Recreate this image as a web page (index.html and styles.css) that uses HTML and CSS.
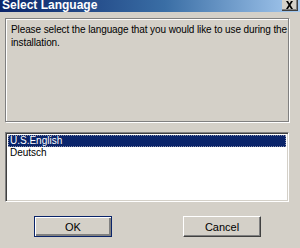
FILE: index.html
```
<!DOCTYPE html>
<html lang="en">
	<head>
		<meta charset="utf-8" />
		<title>Select Language</title>
		<link rel="stylesheet" href="styles.css">
	</head>
	<body>
		<div class="dialog">
			<div class="titlebar">
				<span class="title">Select Language</span>
				<span class="close">
					<svg width="9" height="8" viewBox="0 0 9 8">
						<path d="M1 0h2l1.5 2.5L6 0h2L5.5 4 8 8H6L4.5 5.5 3 8H1l2.5-4z" fill="#000" />
					</svg>
				</span>
			</div>

			<div class="content">
				<div class="group">
					<p>Please select the language that you would like to use during the installation.</p>
				</div>

				<ul class="listbox">
					<li class="selected">U.S.English</li>
					<li>Deutsch</li>
				</ul>

				<div class="buttons">
					<button type="button" class="default">OK</button>
					<button type="button">Cancel</button>
				</div>
			</div>
		</div>
	</body>
</html>
```

FILE: styles.css
```
* {
	box-sizing: border-box;
}

body {
	margin: 0;
	background: #d4d0c8;
	font-family: 'Liberation Sans', Arial, sans-serif;
	font-size: 10px;
	color: #000;
}

.dialog {
	width: 300px;
	height: 248px;
	overflow: hidden;
}

.titlebar {
	display: flex;
	justify-content: space-between;
	align-items: flex-start;
	height: 12px;
	background: linear-gradient(to right, #0a246a 0%, #3a6ea5 55%, #a6caf0 100%);
	overflow: hidden;
}

.title {
	color: #fff;
	font-weight: bold;
	font-size: 12px;
	line-height: 11px;
	padding-left: 2px;
}

.close {
	display: flex;
	align-items: center;
	justify-content: center;
	width: 16px;
	height: 11px;
	margin-right: 2px;
	background: #d4d0c8;
	border-right: 1px solid #404040;
	border-bottom: 1px solid #404040;
	box-shadow: inset -1px -1px 0 #808080;
}

.content {
	padding: 6px 11px 0 5px;
	display: flex;
	flex-direction: column;
}

.group {
	height: 104px;
	border: 1px solid #808080;
	box-shadow: 1px 1px 0 #fff, inset 1px 1px 0 #fff;
	padding: 4px 0 4px 5px;
}

.group p {
	margin: 0;
	line-height: 13px;
	letter-spacing: -0.1px;
}

.listbox {
	list-style: none;
	margin: 10px 0 0;
	padding: 2px;
	height: 70px;
	background: #fff;
	border-top: 1px solid #808080;
	border-left: 1px solid #808080;
	border-right: 1px solid #fff;
	border-bottom: 1px solid #fff;
	box-shadow: inset 1px 1px 0 #404040, inset -1px -1px 0 #d4d0c8;
}

.listbox li {
	height: 12px;
	line-height: 12px;
	padding-left: 2px;
}

.listbox .selected {
	background: #0a246a;
	color: #fff;
	outline: 1px dotted #8a8fa8;
	outline-offset: -1px;
}

.buttons {
	display: flex;
	margin-top: 14px;
	padding-left: 29px;
	gap: 71px;
}

button {
	width: 78px;
	height: 21px;
	padding: 0;
	background: #d4d0c8;
	font-family: 'Liberation Sans', Arial, sans-serif;
	font-size: 11px;
	color: #000;
	border: 1px solid;
	border-color: #fff #404040 #404040 #fff;
	box-shadow: inset -1px -1px 0 #808080;
}

button.default {
	border: 1px solid #0a246a;
	box-shadow: inset 1px 1px 0 #fff, inset -2px -2px 0 #808080;
}
```
